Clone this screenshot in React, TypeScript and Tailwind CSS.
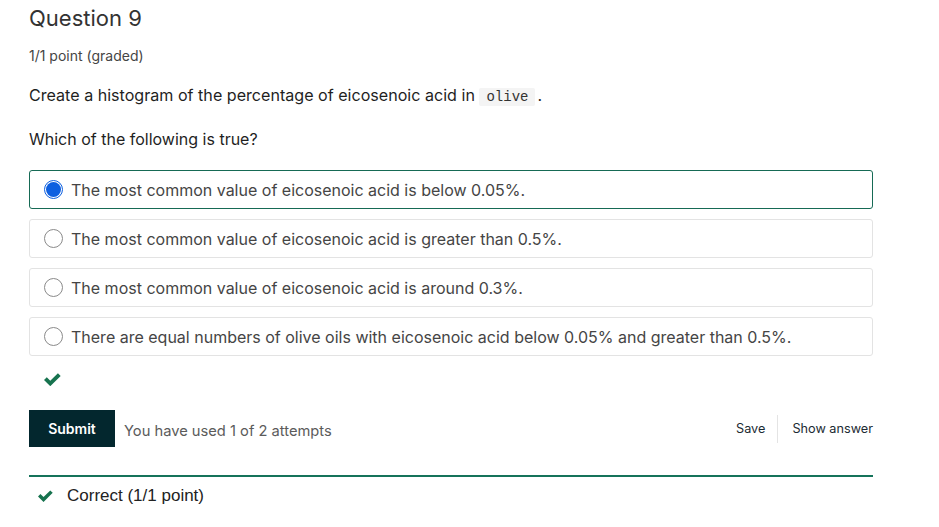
const font = { fontFamily: 'Inter, "Noto Sans", sans-serif' };

const OPTIONS = [
  'The most common value of eicosenoic acid is below 0.05%.',
  'The most common value of eicosenoic acid is greater than 0.5%.',
  'The most common value of eicosenoic acid is around 0.3%.',
  'There are equal numbers of olive oils with eicosenoic acid below 0.05% and greater than 0.5%.',
];

function Check({ className }: { className?: string }) {
  return (
    <svg viewBox="0 0 16 12" className={className} fill="currentColor">
      <path d="M0 6.4 L2.6 3.8 L5.9 7.1 L13.1 0 L15.7 2.6 L5.9 12.3 Z" />
    </svg>
  );
}

function Radio({ checked }: { checked: boolean }) {
  return checked ? (
    <span className="flex h-[19px] w-[19px] shrink-0 items-center justify-center rounded-full border border-[#0d5fe0] bg-white">
      <span className="h-[15px] w-[15px] rounded-full bg-[#0d5fe0]" />
    </span>
  ) : (
    <span className="h-[19px] w-[19px] shrink-0 rounded-full border border-[#8a8a8a] bg-white" />
  );
}

export default function App() {
  return (
    <div className="min-h-screen bg-white pl-[29px] pr-[66px] text-[#313131]" style={font}>
      <h2 className="pt-[4px] text-[22px] leading-[28px] text-[#333]">Question 9</h2>
      <p className="mt-[15px] text-[14px] leading-[18px] text-[#454545]">1/1 point (graded)</p>

      <p className="mt-[20px] text-[16.1px] leading-[20px] text-[#1f1f1f]">
        Create a histogram of the percentage of eicosenoic acid in{' '}
        <code
          className="rounded-[2px] bg-[#f4f4f4] px-[7px] py-[1px] text-[14px] text-[#333]"
          style={{ fontFamily: '"Liberation Mono", monospace' }}
        >
          olive
        </code>
        <span className="ml-[2px]">.</span>
      </p>

      <p className="mt-[22px] text-[16px] leading-[20px] text-[#1f1f1f]">Which of the following is true?</p>

      <div className="mt-[21px] flex flex-col gap-[10px]">
        {OPTIONS.map((o, i) => (
          <div
            key={o}
            className={`flex h-[39px] items-center gap-[8px] rounded-[3px] border pl-[14px] text-[16px] text-[#454545] ${
              i === 0 ? 'border-[#166a55]' : 'border-[#e3e3e3]'
            }`}
          >
            <Radio checked={i === 0} />
            <span>{o}</span>
          </div>
        ))}
      </div>

      <div className="mt-[17px] pl-[15px]">
        <Check className="h-[13px] w-[17px] text-[#17734f]" />
      </div>

      <div className="mt-[24px] flex items-center">
        <button className="h-[37px] w-[86px] bg-[#03272e] text-[14px] font-semibold text-white">Submit</button>
        <span className="ml-[9px] mt-[6px] text-[14.7px] text-[#5b5b5b]">You have used 1 of 2 attempts</span>
        <div className="ml-auto flex items-center text-[12.7px] text-[#1c2b33]">
          <span className="pr-[12px]">Save</span>
          <span className="h-[28px] w-px bg-[#e4e4e4]" />
          <span className="pl-[14px]">Show answer</span>
        </div>
      </div>

      <div className="mt-[28px] h-[2px] bg-[#15735a]" />

      <div className="mt-[6px] flex items-center pl-[9px]">
        <Check className="h-[12px] w-[15px] text-[#17734f]" />
        <span
          className="ml-[14px] text-[17px] text-[#222]"
          style={{ fontFamily: '"Liberation Sans", Arial, sans-serif' }}
        >
          Correct (1/1 point)
        </span>
      </div>
    </div>
  );
}
